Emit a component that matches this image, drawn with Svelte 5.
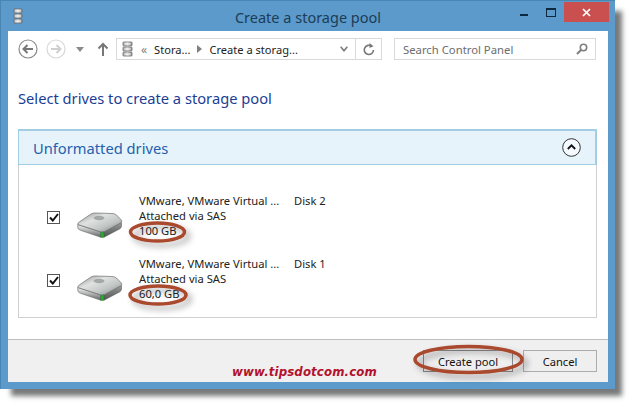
<script>
  const drives = [
    { name: 'VMware, VMware Virtual ...', disk: 'Disk 2', size: '100 GB' },
    { name: 'VMware, VMware Virtual ...', disk: 'Disk 1', size: '60,0 GB' }
  ];
</script>

<svelte:head><title>Create a storage pool</title></svelte:head>

{#snippet stack(w, h)}
  <svg width={w} height={h} viewBox="0 0 12 18" preserveAspectRatio="none" aria-hidden="true">
    <defs>
      <linearGradient id="sg" x1="0" x2="1" y1="0" y2="0">
        <stop offset="0" stop-color="#9a9a9a" /><stop offset=".5" stop-color="#e6e6e6" /><stop offset="1" stop-color="#8a8a8a" />
      </linearGradient>
    </defs>
    <rect x="1" y="1" width="10" height="4.6" rx="1" fill="url(#sg)" stroke="#666" stroke-width=".7" />
    <rect x="1" y="6.7" width="10" height="4.6" rx="1" fill="url(#sg)" stroke="#666" stroke-width=".7" />
    <rect x="1" y="12.4" width="10" height="4.6" rx="1" fill="url(#sg)" stroke="#666" stroke-width=".7" />
    <rect x="2.5" y="2.8" width="7" height="1" fill="#f5f5f5" />
    <rect x="2.5" y="8.5" width="7" height="1" fill="#f5f5f5" />
    <rect x="2.5" y="14.2" width="7" height="1" fill="#f5f5f5" />
  </svg>
{/snippet}

{#snippet disk()}
  <svg class="disk" width="46" height="26" viewBox="0 0 46 26" aria-hidden="true">
    <defs>
      <linearGradient id="dtop" x1="0" x2="1" y1="0" y2="1">
        <stop offset="0" stop-color="#8d9190" /><stop offset=".35" stop-color="#dfe2e1" /><stop offset=".65" stop-color="#c2c6c4" /><stop offset="1" stop-color="#7c807e" />
      </linearGradient>
      <linearGradient id="dleft" x1="0" x2="0" y1="0" y2="1">
        <stop offset="0" stop-color="#f2f3f3" /><stop offset=".45" stop-color="#b6b9b8" /><stop offset="1" stop-color="#5f6261" />
      </linearGradient>
      <linearGradient id="dright" x1="0" x2="0" y1="0" y2="1">
        <stop offset="0" stop-color="#9a9d9c" /><stop offset="1" stop-color="#4f5251" />
      </linearGradient>
    </defs>
    <path d="M.8 12.500 L24 20 V25.300 L3.500 18.300 Q1 17.500 .8 15.500 Z" fill="url(#dleft)" stroke="#5f6261" stroke-width=".6" />
    <path d="M27 19.800 V25.200 L42.500 17 Q44.500 16 44.500 14 V10.500 Z" fill="url(#dright)" stroke="#5f6261" stroke-width=".6" />
    <path d="M.8 12.500 Q.5 11 2.500 9.800 L14 2 Q16 .8 19 1 L35 1.500 Q38 1.700 39.500 3 L44.300 8 Q45.500 9.800 43.500 11 L27.500 19.600 Q25.500 20.500 23.500 19.800 Z" fill="url(#dtop)" stroke="#6d706f" stroke-width=".7" />
    <ellipse cx="22" cy="6" rx="5.500" ry="2.200" fill="#7f8382" opacity=".6" />
    <path d="M23.800 20 Q25 20.600 27 19.800 V25.200 Q25.500 25.800 23.800 25.300 Z" fill="#22b02e" stroke="#146c1c" stroke-width=".4" />
  </svg>
{/snippet}

<div class="page">
  <div class="window">
    <header class="titlebar">
      <span class="appicon">{@render stack(10, 16)}</span>
      <span class="title">Create a storage pool</span>
      <div class="controls">
        <span class="min"></span>
        <span class="max"></span>
        <span class="close">
          <svg width="9" height="9" viewBox="0 0 9 9" aria-hidden="true"><path d="M1 1 L8 8 M8 1 L1 8" stroke="#fff" stroke-width="1.700" /></svg>
        </span>
      </div>
    </header>

    <div class="client">
      <nav class="nav">
        <svg class="back" width="20" height="20" viewBox="0 0 20 20" aria-hidden="true">
          <circle cx="10" cy="10" r="9" fill="#fff" stroke="#8c8c8c" stroke-width="1.200" />
          <path d="M15 10 H6 M9.500 6 L5.500 10 L9.500 14" fill="none" stroke="#777" stroke-width="2" />
        </svg>
        <svg class="fwd" width="20" height="20" viewBox="0 0 20 20" aria-hidden="true">
          <circle cx="10" cy="10" r="9" fill="#fff" stroke="#d8d8d8" stroke-width="1.200" />
          <path d="M5 10 H14 M10.500 6 L14.500 10 L10.500 14" fill="none" stroke="#cfcfcf" stroke-width="2" />
        </svg>
        <svg class="drop" width="8" height="5" viewBox="0 0 8 5" aria-hidden="true"><path d="M0 0 H8 L4 5 Z" fill="#8a8a8a" /></svg>
        <svg class="up" width="12" height="14" viewBox="0 0 12 14" aria-hidden="true"><path d="M6 14 V2 M1.500 6.500 L6 2 L10.500 6.500" fill="none" stroke="#777" stroke-width="2" /></svg>
        <div class="address">
          <span class="addricon">{@render stack(11, 16)}</span>
          <span class="chev">«</span>
          <span>Stora...</span>
          <svg class="sep" width="5" height="8" viewBox="0 0 5 8" aria-hidden="true"><path d="M0 0 L5 4 L0 8 Z" fill="#808080" /></svg>
          <span>Create a storag...</span>
          <svg class="addrdown" width="8" height="6" viewBox="0 0 8 6" aria-hidden="true"><path d="M.7 .8 L4 4.800 L7.300 .8" fill="none" stroke="#777" stroke-width="1.500" /></svg>
          <span class="refresh">
            <svg width="12" height="13" viewBox="0 0 12 13" aria-hidden="true"><path d="M8.800 3.300 A4.600 4.600 0 1 0 10.500 7" fill="none" stroke="#777" stroke-width="1.600" /><path d="M6.500 0 L10.500 3.200 L6.500 5 Z" fill="#777" /></svg>
          </span>
        </div>
        <div class="search">
          <span>Search Control Panel</span>
          <svg width="12" height="12" viewBox="0 0 12 12" aria-hidden="true"><circle cx="7.500" cy="4.500" r="3.200" fill="none" stroke="#808080" stroke-width="1.600" /><path d="M5 7 L1 11" stroke="#808080" stroke-width="2.200" /></svg>
        </div>
      </nav>

      <main class="content">
        <h1>Select drives to create a storage pool</h1>
        <section class="panel">
          <div class="panelhead">
            <h2>Unformatted drives</h2>
            <svg width="19" height="19" viewBox="0 0 19 19" aria-hidden="true">
              <circle cx="9.500" cy="9.500" r="8.800" fill="#f4fafd" stroke="#333" stroke-width="1" />
              <path d="M5.800 11 L9.500 7.300 L13.200 11" fill="none" stroke="#111" stroke-width="1.800" />
            </svg>
          </div>
          <div class="drives">
            {#each drives as d}
              <div class="drive">
                <span class="check">
                  <svg width="10" height="9" viewBox="0 0 10 9" aria-hidden="true"><path d="M1 4.500 L3.800 7.500 L9 1" fill="none" stroke="#111" stroke-width="2" /></svg>
                </span>
                {@render disk()}
                <div class="info">
                  <div class="line"><span class="dname">{d.name}</span><span>{d.disk}</span></div>
                  <div>Attached via SAS</div>
                  <div>{d.size}</div>
                </div>
              </div>
            {/each}
          </div>
        </section>
      </main>

      <footer class="footer">
        <button class="primary">Create pool</button>
        <button>Cancel</button>
      </footer>
    </div>
  </div>

  <svg class="marks" width="631" height="405" viewBox="0 0 631 405" aria-hidden="true">
    <defs>
      <filter id="ms" x="-20%" y="-40%" width="140%" height="200%">
        <feDropShadow dx="4" dy="4" stdDeviation="3" flood-color="#000" flood-opacity=".35" />
      </filter>
    </defs>
    <g fill="none" stroke="#a9482f" stroke-width="3.500" filter="url(#ms)">
      <ellipse cx="157.500" cy="232" rx="27" ry="9" />
      <ellipse cx="158" cy="295" rx="28" ry="9" />
      <ellipse cx="468.500" cy="359.500" rx="53.500" ry="13" />
    </g>
  </svg>
  <span class="watermark">www.tipsdotcom.com</span>
</div>

<style>
  :global(body) { margin: 0; background: #fff; }
  .page {
    position: relative;
    width: 631px;
    height: 405px;
    overflow: hidden;
    background: #fff;
    font-family: "Noto Sans", "Open Sans", sans-serif;
    color: #222;
  }
  .window {
    width: 615px;
    height: 389px;
    box-sizing: border-box;
    padding: 0 7px 7px 8px;
    background: #5b9aca;
    border: 1px solid #4a86b4;
    border-width: 1px 0 0 1px;
    box-shadow: 9px 9px 5px -2px #77797a;
    display: flex;
    flex-direction: column;
  }
  .titlebar {
    height: 30px;
    flex: none;
    position: relative;
    display: flex;
    align-items: center;
    justify-content: center;
    margin-left: -1px;
  }
  .appicon { position: absolute; left: 5px; top: 7px; line-height: 0; }
  .title { font-size: 14.500px; color: #1d3c57; transform: translateY(1px); }
  .controls {
    position: absolute;
    right: -1px;
    top: 1px;
    display: flex;
    align-items: flex-start;
  }
  .min { width: 8px; height: 2px; background: #10283f; margin: 12px 18px 0 0; }
  .max { width: 8px; height: 6px; border: 1px solid #10283f; border-top-width: 2px; margin: 6px 8px 0 0; }
  .close {
    width: 45px;
    height: 20px;
    background: #c9504f;
    display: flex;
    align-items: center;
    justify-content: center;
  }
  .client {
    flex: 1;
    margin-left: -1px;
    background: #fff;
    display: flex;
    flex-direction: column;
    min-height: 0;
  }
  .nav {
    height: 22px;
    margin-top: 7px;
    padding: 0 12px 0 10px;
    display: flex;
    align-items: center;
    flex: none;
  }
  .back { margin-right: 8px; }
  .fwd { margin-right: 10px; }
  .drop { margin-right: 13px; }
  .up { margin-right: 7px; }
  .address {
    width: 266px;
    height: 22px;
    box-sizing: border-box;
    border: 1px solid #d9d9d9;
    display: flex;
    align-items: center;
    font-size: 11.100px;
    color: #222;
    padding-left: 5px;
    margin-right: 12px;
  }
  .addricon { line-height: 0; margin-right: 8px; }
  .chev { color: #808080; margin-right: 7px; font-size: 12px; }
  .sep { margin: 0 7px 0 7px; }
  .addrdown { margin-left: auto; margin-right: 7px; }
  .refresh {
    width: 25px;
    height: 100%;
    border-left: 1px solid #d9d9d9;
    display: flex;
    align-items: center;
    justify-content: center;
  }
  .search {
    flex: 1;
    height: 22px;
    box-sizing: border-box;
    border: 1px solid #d9d9d9;
    display: flex;
    align-items: center;
    justify-content: space-between;
    padding: 0 7px 0 8px;
    font-size: 11.300px;
    color: #6d6d6d;
  }
  .content {
    flex: 1;
    padding: 0 11px 0 10px;
    min-height: 0;
  }
  h1 {
    margin: 27px 0 0;
    font-size: 14.700px;
    font-weight: 400;
    line-height: 22px;
    color: #1a3e96;
  }
  .panel {
    margin-top: 20px;
    height: 189px;
    box-sizing: border-box;
    border: 1px solid #d0d0d0;
    border-top: 0;
  }
  .panelhead {
    height: 36px;
    margin: 0 -1px;
    box-sizing: border-box;
    background: #e6f3fa;
    border: 1px solid #a3cde3;
    border-width: 2px 2px 1px 1px;
    display: flex;
    align-items: center;
    justify-content: space-between;
    padding: 0 14px 0 14px;
  }
  h2 {
    margin: 0;
    font-size: 14.700px;
    font-weight: 400;
    color: #2460ae;
  }
  .drives {
    padding-top: 28px;
    display: flex;
    flex-direction: column;
    gap: 18px;
  }
  .drive {
    display: flex;
    align-items: flex-start;
    height: 45px;
    padding-left: 28px;
    font-size: 11.200px;
    line-height: 15px;
  }
  .check {
    width: 11px;
    height: 11px;
    border: 1px solid #555;
    background: #fff;
    display: flex;
    align-items: center;
    justify-content: center;
    margin: 18px 17px 0 0;
  }
  .disk { margin: 19px 16px 0 0; flex: none; }
  .info { color: #222; }
  .line { display: flex; }
  .dname { width: 155px; white-space: nowrap; }
  .footer {
    height: 43px;
    flex: none;
    box-sizing: border-box;
    background: #f0f0f0;
    border-top: 1px solid #bfbfbf;
    display: flex;
    justify-content: flex-end;
    gap: 10px;
    padding: 10px 11px 0 0;
  }
  button {
    width: 74px;
    height: 22px;
    box-sizing: border-box;
    border: 1px solid #acacac;
    background: #efefef;
    font: inherit;
    font-size: 11.100px;
    color: #111;
    padding: 0;
  }
  .primary { width: 90px; border-color: #8b8b8b; }
  .marks { position: absolute; left: 0; top: 0; pointer-events: none; }
  .watermark {
    position: absolute;
    left: 232px;
    top: 365px;
    font-family: "DejaVu Sans", sans-serif;
    font-size: 11.800px;
    font-weight: 700;
    font-style: italic;
    color: #b3122c;
    letter-spacing: .1px;
  }
</style>
